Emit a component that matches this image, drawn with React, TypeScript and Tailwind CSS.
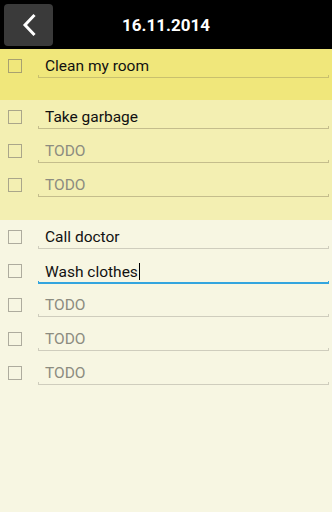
const sections = [
  { bg: 'bg-[#f0e77b]', pad: 'pb-[17px]', line: 'border-[#c9c06e]', box: 'border-[#a8a170]', items: ['Clean my room'] },
  { bg: 'bg-[#f3efb2]', pad: 'pb-[18px]', line: 'border-[#c4bd8c]', box: 'border-[#aaa68a]', items: ['Take garbage', '', ''] },
  { bg: 'bg-[#f7f6e2]', pad: 'pb-[16px]', line: 'border-[#cfcdbd]', box: 'border-[#aeac9e]', items: ['Call doctor', 'Wash clothes', '', '', ''] },
];

function Row({ text, line, box, focused }: { text: string; line: string; box: string; focused?: boolean }) {
  return (
    <div className="flex h-[34px] items-center">
      <div className="flex w-[38px] shrink-0 pl-2">
        <div className={`h-[14px] w-[14px] border ${box}`} />
      </div>
      <div className="relative mr-[3px] flex h-full flex-1 items-center">
        <span className={`pt-[2px] pl-[7px] text-[15.5px] ${text ? 'text-[#111]' : 'text-[#8c8c80]'}`}>
          {text || 'TODO'}
          {focused && <span className="ml-px inline-block h-[17px] w-px translate-y-[3px] bg-black" />}
        </span>
        {focused ? (
          <div className="absolute right-0 bottom-[4px] left-0 h-[3px] border-x border-b-2 border-[#33a5de]" />
        ) : (
          <div className={`absolute right-0 bottom-[5px] left-0 h-[3px] border-x border-b ${line}`} />
        )}
      </div>
    </div>
  );
}

export default function App() {
  return (
    <div className="flex h-[512px] w-[332px] flex-col font-['Roboto',sans-serif]">
      <div className="flex h-[49px] shrink-0 items-center bg-black px-1">
        <button className="flex h-[42px] w-[49px] items-center justify-center rounded-sm bg-[#3a3a3a]">
          <svg width="16" height="24" viewBox="0 0 16 24" fill="none">
            <path d="M12.5 3 L4 12 L12.5 21" stroke="white" strokeWidth="3" strokeLinecap="square" />
          </svg>
        </button>
        <div className="flex-1 pt-[2px] pr-[49px] text-center text-[17px] font-bold text-white">16.11.2014</div>
      </div>
      {sections.map((s, i) => (
        <div key={i} className={`${s.bg} ${s.pad} ${i === 2 ? 'flex-1' : ''}`}>
          {s.items.map((t, j) => (
            <Row key={j} text={t} line={s.line} box={s.box} focused={i === 2 && j === 1} />
          ))}
        </div>
      ))}
    </div>
  );
}
